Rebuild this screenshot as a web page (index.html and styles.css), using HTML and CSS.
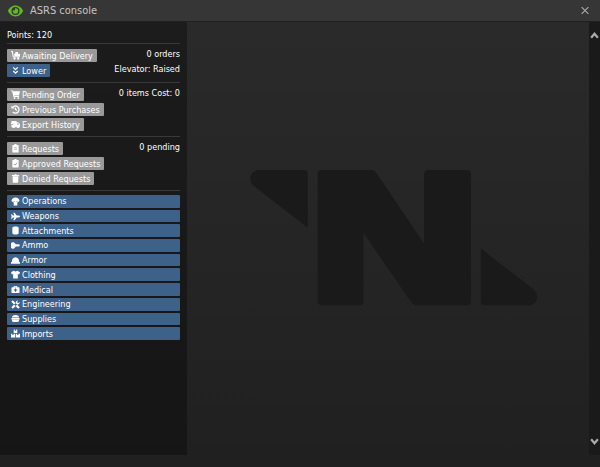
FILE: index.html
```html
<!DOCTYPE html>
<html lang="en">
<head>
    <meta charset="UTF-8">
    <title>ASRS console</title>
    <link rel="stylesheet" href="styles.css">
</head>
<body>
<header class="titlebar">
    <svg class="eye" viewBox="0 0 16 12"><path fill="#5ebd1e" d="M8 0.6C4.5 0.6 1.8 3 0.4 6 1.8 9 4.5 11.4 8 11.4S14.200 9 15.600 6C14.200 3 11.500 0.600 8 0.600z"/><circle cx="8" cy="6" r="4" fill="#363636"/><path fill="#5ebd1e" d="M8 3.300a2.700 2.700 0 1 1-2.600 2c1.500.5 2.500-.5 2-1.900z"/></svg>
    <h1>ASRS console</h1>
    <button type="button" class="close" aria-label="Close"><svg viewBox="0 0 8 8"><path d="M1 1l6 6M7 1L1 7"/></svg></button>
</header>
<div class="window">
    <nav class="sidebar">
        <div class="points">Points: 120</div>
        <section class="group">
            <div class="row">
                <button type="button" class="button gray"><svg viewBox="0 0 10 10"><path d="M0 0h2l1 6h7v1H2L1 1H0zM3.300 3h1.500V1h3v2H10v2.700H3.800zM4 7a1.300 1.300 0 1 1-.1 0zM8 7a1.300 1.300 0 1 1-.1 0z"/></svg>Awaiting Delivery</button>
                <span>0 orders</span>
            </div>
            <div class="row">
                <button type="button" class="button"><svg viewBox="0 0 10 10"><path class="line" d="M2.500 1.500L5 4l2.500-2.500M2.500 5.500L5 8l2.500-2.500"/></svg>Lower</button>
                <span>Elevator: Raised</span>
            </div>
        </section>
        <section class="group">
            <div class="row">
                <button type="button" class="button gray"><svg viewBox="0 0 10 10"><path d="M0 .5h2L2.300 1.500H10L9 6H3.500l.2.800H9v1H2.800L1.200 1.500H0zM4 8a1 1 0 1 1-.1 0zM8 8a1 1 0 1 1-.1 0z"/></svg>Pending Order</button>
                <span>0 items Cost: 0</span>
            </div>
            <div class="row">
                <button type="button" class="button gray"><svg viewBox="0 0 10 10"><path class="line" d="M1.500 3A4 4 0 1 1 2 7.800M5 2.700V5l1.700 1.200"/><path d="M.5.800L4 4H.5z"/></svg>Previous Purchases</button>
            </div>
            <div class="row">
                <button type="button" class="button gray"><svg viewBox="0 0 10 10"><path d="M.5 1h5.700v1.500h1.800l2 2V8H9.300a1.500 1.500 0 0 1-2.800 0H4.300a1.500 1.500 0 0 1-2.800 0H.5V5.500h2v-.7H0V3.300h.5zM6.900 3.500V5H9L7.800 3.500z"/></svg>Export History</button>
            </div>
        </section>
        <section class="group">
            <div class="row">
                <button type="button" class="button gray"><svg viewBox="0 0 10 10"><path fill-rule="evenodd" d="M2 1h1.700a1.300 1.300 0 0 1 2.600 0H8q.5 0 .5.500V9q0 .5-.5.500H2q-.5 0-.5-.5V1.500Q1.500 1 2 1zM3.500 4v.7h3V4zM3.500 6v.7h3V6z"/></svg>Requests</button>
                <span>0 pending</span>
            </div>
            <div class="row">
                <button type="button" class="button gray"><svg viewBox="0 0 10 10"><path d="M2 1h1.700a1.300 1.300 0 0 1 2.600 0H8q.5 0 .5.500V9q0 .5-.5.500H2q-.5 0-.5-.5V1.500Q1.500 1 2 1z"/><path class="mark" d="M3.200 5.500l1.300 1.300 2.300-2.600"/></svg>Approved Requests</button>
            </div>
            <div class="row">
                <button type="button" class="button gray"><svg viewBox="0 0 10 10"><path d="M1 1h2.500l.5-.8h2l.5.800H9v1.200H1zM1.700 2.500h6.600L8 9q0 .8-.8.800H2.800Q2 9.800 2 9z"/></svg>Denied Requests</button>
            </div>
        </section>
        <section class="group categories">
            <button type="button" class="button"><svg viewBox="0 0 10 10"><path fill-rule="evenodd" d="M.5 4.500C.8 1.800 2.500.5 5 .5s4.200 1.300 4.500 4L7 6.500v3H3v-3zM2.500 4.500l1.200 1.200V4.500zM7.500 4.500L6.300 5.700V4.500z"/></svg>Operations</button>
            <button type="button" class="button"><svg viewBox="0 0 10 10"><path d="M0 2.500h1L2.200 4h1.500L2.500.8H4L6.300 4H8.500Q10 4.300 10 5T8.500 6H6.300L4 9.200H2.500L3.700 6H2.200L1 7.500H0L.7 5z"/></svg>Weapons</button>
            <button type="button" class="button"><svg viewBox="0 0 10 10"><path d="M3 .5h4l.5 1h1v7h-1l-.5 1H3l-.5-1h-1v-7h1z"/></svg>Attachments</button>
            <button type="button" class="button"><svg viewBox="0 0 10 10"><path d="M0 2.500Q1 1 3 1.500l2.500 2H9L10 5 9 6H5.500L3 8.500Q1 9 0 7.500z"/></svg>Ammo</button>
            <button type="button" class="button"><svg viewBox="0 0 10 10"><path d="M1 6.500Q1 2 5 1.500 9 2 9 6.500l1 .5v1.500H0V7z"/></svg>Armor</button>
            <button type="button" class="button"><svg viewBox="0 0 10 10"><path d="M3 .8Q5 2.400 7 .8L10 2.500 9 5l-1.400-.6v5H2.400v-5L1 5 0 2.500z"/></svg>Clothing</button>
            <button type="button" class="button"><svg viewBox="0 0 10 10"><path fill-rule="evenodd" d="M3 2.500V1h4v1.500h1.500q1 0 1 1V8q0 1-1 1h-7q-1 0-1-1V3.500q0-1 1-1zM4 2v.5h2V2zM4.400 3.800V5H3.200v1.200h1.200v1.200h1.200V6.200h1.200V5H5.600V3.800z"/></svg>Medical</button>
            <button type="button" class="button"><svg viewBox="0 0 10 10"><path d="M.3 2L2 .3 9.700 8 8 9.700zM9.700 2L8 3.500 6.700 2.300 8 .5Q5.500.2 5.300 3L.3 8l1.700 1.700 5-4.700Q9.700 5.200 9.700 2z"/></svg>Engineering</button>
            <button type="button" class="button"><svg viewBox="0 0 10 10"><path d="M1 4Q1.200 1 5 1t4 3zM.5 4.500h9V6h-9zM1 6.500h8Q9 9 7.500 9h-5Q1 9 1 6.500z"/></svg>Supplies</button>
            <button type="button" class="button"><svg viewBox="0 0 10 10"><path d="M3 .5h1.300V2h1.400V.5H7v4H3zM0 5.300h1.500v1.500h1.300V5.300h1.800v4.200H0zM5.400 5.300h1.500v1.500h1.300V5.300H10v4.200H5.400z"/></svg>Imports</button>
        </section>
    </nav>
    <main class="content">
        <svg class="logo" viewBox="0 0 290 138"><path d="M9 1H54q4 0 4 4V59L4 17C-3 11 1 1 9 1zM72 1h50q3 0 5 3l48 71V5q0-4 4-4h39q4 0 4 4V133q0 4-4 4H167q-3 0-5-3L114 64v69q0 4-4 4H72q-4 0-4-4V5q0-4 4-4zM232 80l53 41c7 6 3 16-5 16H236q-4 0-4-4z"/></svg>
    </main>
    <div class="scrollbar">
        <svg viewBox="0 0 8 6"><path d="M1 5l3-3.500L7 5"/></svg>
        <svg viewBox="0 0 8 6"><path d="M1 1l3 3.500L7 1"/></svg>
    </div>
</div>
</body>
</html>
```
FILE: styles.css
```css
* {
    box-sizing: border-box;
}
body {
    display: flex;
    flex-direction: column;
    min-height: 100vh;
    margin: 0;
    background: #202020;
    color: #fff;
    font-family: "DejaVu Sans Condensed", Verdana, sans-serif;
    font-size: 9px;
    line-height: 12px;
}
.titlebar {
    display: flex;
    align-items: center;
    height: 21px;
    padding: 0 9px 0 7px;
    background: #363636;
}
.eye {
    width: 17px;
    height: 12px;
}
h1 {
    flex: 1;
    margin: 0 0 0 6px;
    color: #c4c4c4;
    font-size: 11px;
    font-weight: 400;
}
.close {
    display: flex;
    padding: 0;
    border: 0;
    background: none;
    cursor: pointer;
}
.close svg {
    width: 12px;
    height: 9px;
}
.close path,
.scrollbar path {
    fill: none;
    stroke: #aaa;
    stroke-width: 1;
}
.window {
    display: flex;
    flex: 1;
    padding-bottom: 12px;
    border-top: 1px solid #202020;
    background: linear-gradient(#2a2a2a, #202020);
}
.sidebar {
    width: 187px;
    padding: 7px 7px 0;
    background: rgba(0, 0, 0, .33);
}
.points {
    padding-bottom: 2px;
}
.group {
    display: grid;
    gap: 2px;
    margin-bottom: 5px;
    padding-top: 5px;
    border-top: 1px solid #393939;
}
.row {
    display: flex;
    align-items: flex-start;
    justify-content: space-between;
    height: 13px;
}
.row span {
    line-height: 10px;
}
.button {
    display: flex;
    align-items: center;
    height: 13px;
    padding: 0 4px 0 3px;
    border: 0;
    border-radius: 1px;
    background: #3e6189;
    color: #fff;
    font: inherit;
    cursor: pointer;
}
.button.gray {
    background: #999;
}
.button svg {
    width: 11px;
    height: 9px;
    margin-right: 1px;
    fill: #fff;
}
.button .line {
    fill: none;
    stroke: #fff;
    stroke-width: 1.400;
}
.button .mark {
    fill: none;
    stroke: #999;
}
.categories {
    grid-auto-rows: 1fr;
    height: 150px;
    padding-top: 4px;
}
.categories .button {
    height: auto;
}
.content {
    display: flex;
    flex: 1;
    align-items: center;
    justify-content: center;
    padding: 0 0 1px 12px;
}
.logo {
    width: 74%;
    fill: #1a1a1a;
}
.scrollbar {
    display: flex;
    flex-direction: column;
    align-items: center;
    justify-content: space-between;
    width: 11px;
    padding: 10px 0;
    background: #1a1a1a;
}
.scrollbar svg {
    width: 9px;
    height: 7px;
}
.scrollbar path {
    stroke-width: 2;
}
```
